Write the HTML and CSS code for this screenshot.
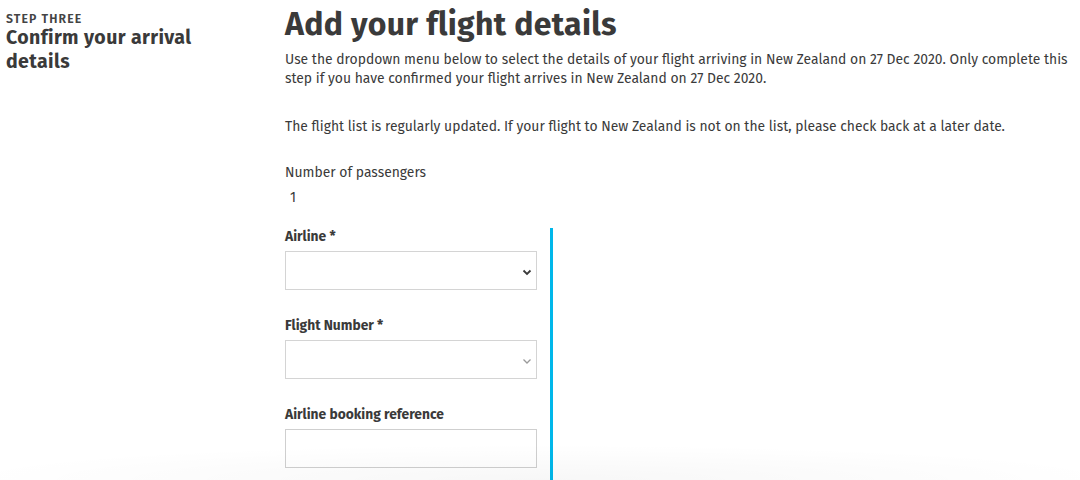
FILE: index.html
```html
<!DOCTYPE html>
<html lang="en">
<head>
<meta charset="utf-8">
<title>Confirm your arrival details</title>
<link rel="stylesheet" href="styles.css">
</head>
<body>
<div class="page">
  <aside class="steps">
    <div class="step-label">STEP THREE</div>
    <h2 class="step-title">Confirm your arrival details</h2>
  </aside>
  <main class="content">
    <h1 class="title">Add your flight details</h1>
    <p class="intro">Use the dropdown menu below to select the details of your flight arriving in New Zealand on 27 Dec 2020. Only complete this step if you have confirmed your flight arrives in New Zealand on 27 Dec 2020.</p>
    <p class="intro note">The flight list is regularly updated. If your flight to New Zealand is not on the list, please check back at a later date.</p>
    <div class="passengers">
      <div class="plain-label">Number of passengers</div>
      <div class="value">1</div>
    </div>
    <div class="form-row">
      <div class="fields">
        <div class="field">
          <label class="label">Airline *</label>
          <div class="select dark"><span class="chev"><svg width="10" height="7" viewBox="0 0 10 7"><path d="M1.5 1.5 L5 5 L8.5 1.5" fill="none" stroke="currentColor" stroke-width="1.8"/></svg></span></div>
        </div>
        <div class="field">
          <label class="label">Flight Number *</label>
          <div class="select"><span class="chev"><svg width="10" height="7" viewBox="0 0 10 7"><path d="M1.5 1.5 L5 5 L8.5 1.5" fill="none" stroke="currentColor" stroke-width="1.3"/></svg></span></div>
        </div>
        <div class="field">
          <label class="label">Airline booking reference</label>
          <div class="input"></div>
        </div>
      </div>
      <div class="side-panel"></div>
    </div>
  </main>
</div>
<div class="fade"></div>
</body>
</html>
```
FILE: styles.css
```css
html, body {
  margin: 0;
  padding: 0;
  background: #ffffff;
  height: 480px;
  overflow: hidden;
}
body {
  font-family: "Fira Sans", "Noto Sans", "Open Sans", sans-serif;
  color: #3c3c3c;
  position: relative;
}
.page {
  display: flex;
}
.steps {
  width: 279px;
  padding-left: 6px;
  padding-top: 12px;
  flex: none;
}
.step-label {
  font-size: 12.3px;
  font-weight: 600;
  letter-spacing: 1.1px;
  color: #444;
  line-height: 14px;
}
.step-title {
  margin: 0;
  font-size: 19.5px;
  font-weight: 700;
  line-height: 24px;
  letter-spacing: 0.4px;
  color: #3a3a3a;
  width: 230px;
}
.content {
  flex: 1;
  padding-top: 4px;
  padding-right: 4px;
}
.title {
  margin: 0;
  font-size: 32px;
  font-weight: 700;
  line-height: 40px;
  letter-spacing: 0.3px;
  color: #3a3a3a;
}
.intro {
  margin: 5.5px 0 0;
  font-size: 13.9px;
  line-height: 19px;
  color: #3a3a3a;
}
.intro.note {
  margin-top: 29px;
}
.passengers {
  margin-top: 27px;
  font-size: 13.9px;
  line-height: 19px;
  color: #3a3a3a;
}
.value {
  padding-left: 5px;
  margin-top: 6px;
}
.form-row {
  display: flex;
  margin-top: 21.5px;
}
.fields {
  width: 252px;
  flex: none;
}
.field + .field {
  margin-top: 27px;
}
.label {
  display: block;
  font-size: 13.8px;
  font-weight: 700;
  line-height: 18px;
  margin-bottom: 5px;
  color: #3a3a3a;
}
.select, .input {
  box-sizing: border-box;
  height: 39px;
  border: 1px solid #d4d4d4;
  background: #fff;
  display: flex;
  align-items: center;
  justify-content: flex-end;
}
.input {
  border-color: #cfcfcf;
}
.chev {
  display: flex;
  margin-right: 4px;
  margin-top: 4px;
  color: #9a9a9a;
}
.select.dark .chev {
  color: #3a3a3a;
}
.side-panel {
  margin-left: 13px;
  width: 0;
  border-left: 3px solid #00b7ea;
  height: 260px;
}
.fade {
  position: absolute;
  left: 0;
  right: 0;
  bottom: 0;
  height: 36px;
  background: radial-gradient(ellipse 55% 100% at 50% 100%, rgba(0,0,0,0.03), rgba(0,0,0,0));
  pointer-events: none;
}
```
